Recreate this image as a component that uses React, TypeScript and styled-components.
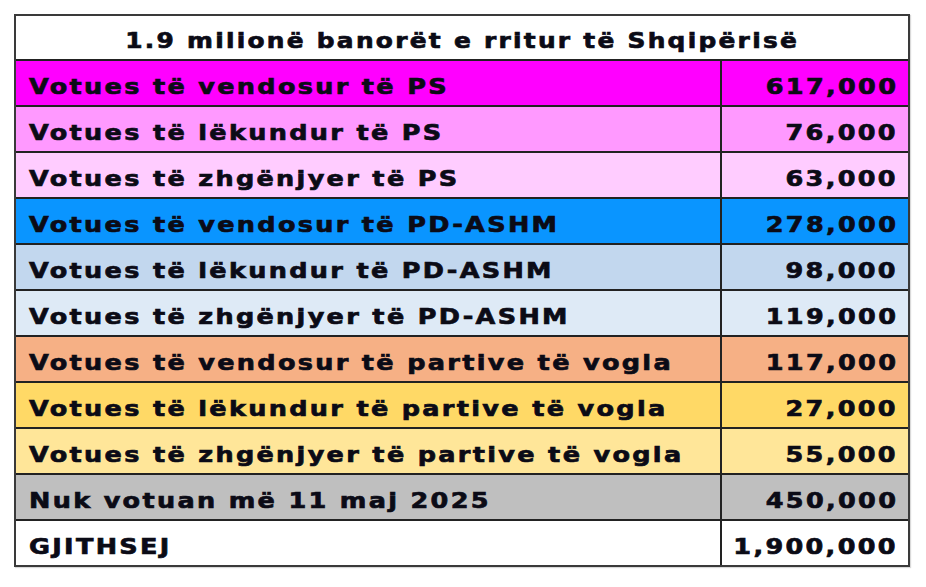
import * as React from 'react'
import styled, { createGlobalStyle } from 'styled-components'

const GlobalStyle = createGlobalStyle`
  html, body {
    margin: 0;
    padding: 0;
    background: #ffffff;
  }
  body {
    font-family: "DejaVu Sans", "Liberation Sans", sans-serif;
  }
`

const Page = styled.div`
  width: 926px;
  height: 587px;
  padding: 14px 0 0 14px;
  box-sizing: border-box;
`

const Table = styled.div`
  width: 896px;
  border: 2px solid #3a3a3a;
  box-sizing: border-box;
  display: flex;
  flex-direction: column;
  box-shadow: 1px 1px 1px rgba(0, 0, 0, 0.15);
`

const TitleRow = styled.div`
  height: 45px;
  display: flex;
  align-items: center;
  justify-content: center;
  padding-top: 6px;
  box-sizing: border-box;
  border-bottom: 2px solid #222;
  background: #ffffff;
`

const Row = styled.div<{ $bg: string; $last?: boolean }>`
  height: 44px;
  display: grid;
  grid-template-columns: 706px 1fr;
  background: ${({ $bg }) => $bg};
  border-bottom: ${({ $last }) => ($last ? 'none' : '2px solid #222')};
`

const Label = styled.div`
  display: flex;
  align-items: center;
  padding: 7px 0 0 13px;
  border-right: 2px solid #222;
`

const Value = styled.div`
  display: flex;
  align-items: center;
  justify-content: flex-end;
  padding: 7px 10px 0 0;
`

const Text = styled.span<{ $origin?: string; $scale?: number }>`
  display: inline-block;
  font-family: "DejaVu Sans", "Liberation Sans", sans-serif;
  font-weight: 700;
  font-size: 22px;
  letter-spacing: 2px;
  color: #0b0b16;
  -webkit-text-stroke: 0.7px #0b0b16;
  white-space: nowrap;
  line-height: 1;
  transform: scaleX(${({ $scale }) => $scale ?? 1.16});
  transform-origin: ${({ $origin }) => $origin ?? 'left'} center;
`

const rows = [
  { label: 'Votues të vendosur të PS', value: '617,000', bg: '#ff00ff' },
  { label: 'Votues të lëkundur të PS', value: '76,000', bg: '#ff99ff' },
  { label: 'Votues të zhgënjyer të PS', value: '63,000', bg: '#ffccff' },
  { label: 'Votues të vendosur të PD-ASHM', value: '278,000', bg: '#0a95ff' },
  { label: 'Votues të lëkundur të PD-ASHM', value: '98,000', bg: '#c2d7ee' },
  { label: 'Votues të zhgënjyer të PD-ASHM', value: '119,000', bg: '#deeaf6' },
  { label: 'Votues të vendosur të partive të vogla', value: '117,000', bg: '#f6b085' },
  { label: 'Votues të lëkundur të partive të vogla', value: '27,000', bg: '#ffd966' },
  { label: 'Votues të zhgënjyer të partive të vogla', value: '55,000', bg: '#ffe699' },
  { label: 'Nuk votuan më 11 maj 2025', value: '450,000', bg: '#bfbfbf' },
  { label: 'GJITHSEJ', value: '1,900,000', bg: '#ffffff' },
]

export default function App() {
  return (
    <>
      <GlobalStyle />
      <Page>
        <Table>
          <TitleRow>
            <Text $origin="center" $scale={1.13}>
              1.9 milionë banorët e rritur të Shqipërisë
            </Text>
          </TitleRow>
          {rows.map((r, i) => (
            <Row key={r.label} $bg={r.bg} $last={i === rows.length - 1}>
              <Label>
                <Text>{r.label}</Text>
              </Label>
              <Value>
                <Text $origin="right">{r.value}</Text>
              </Value>
            </Row>
          ))}
        </Table>
      </Page>
    </>
  )
}
